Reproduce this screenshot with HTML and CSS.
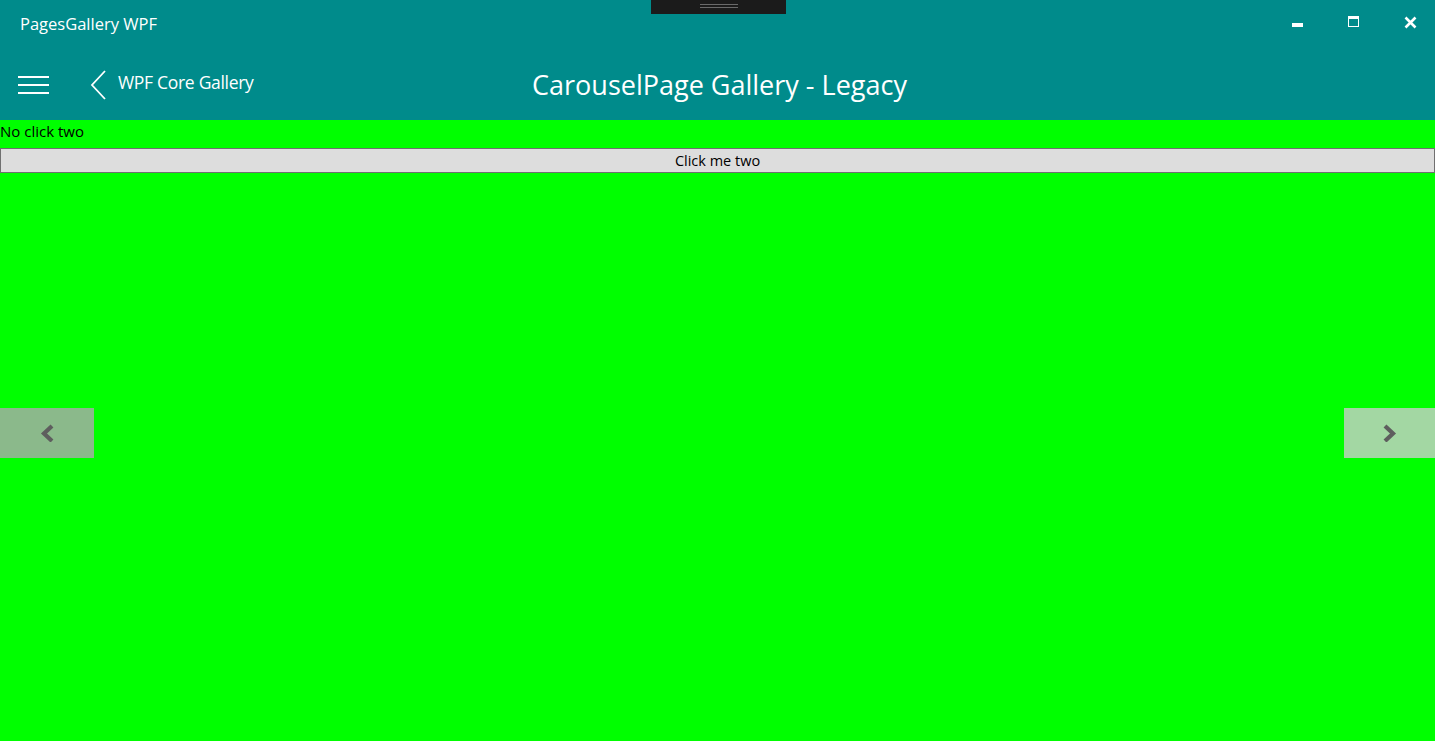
FILE: index.html
```html
<!DOCTYPE html>
<html>
<head>
<meta charset="utf-8">
<link rel="stylesheet" href="styles.css">
</head>
<body>
<div class="app">
  <header class="header">
    <div class="titlebar">
      <span class="app-title">PagesGallery WPF</span>
      <div class="grip"><span class="grip-line"></span><span class="grip-line"></span></div>
      <div class="win-controls">
        <span class="win-btn"><svg width="12" height="12" viewBox="0 0 12 12"><rect x="0" y="7" width="11" height="4" fill="#fff"/></svg></span>
        <span class="win-btn"><svg width="12" height="12" viewBox="0 0 12 12"><rect x="0.5" y="0.5" width="10" height="10" fill="none" stroke="#fff"/><rect x="0" y="0" width="11" height="3" fill="#fff"/></svg></span>
        <span class="win-btn"><svg width="13" height="13" viewBox="0 0 13 13"><path d="M1.5 1.5 L11.5 11.5 M11.5 1.5 L1.5 11.5" stroke="#fff" stroke-width="2.6"/></svg></span>
      </div>
    </div>
    <div class="navbar">
      <div class="nav-left">
        <svg class="hamburger" width="32" height="20" viewBox="0 0 32 20"><path d="M0 2 H31 M0 10 H31 M0 18 H31" stroke="#fff" stroke-width="2"/></svg>
        <div class="back">
          <svg width="17" height="30" viewBox="0 0 17 30"><path d="M15 1 L2 15 L15 29" fill="none" stroke="#fff" stroke-width="1.8"/></svg>
          <span class="back-text">WPF Core Gallery</span>
        </div>
      </div>
      <h1 class="page-title">CarouselPage Gallery - Legacy</h1>
    </div>
  </header>
  <main class="content">
    <div class="label">No click two</div>
    <button class="btn">Click me two</button>
    <div class="arrow arrow-left"><svg width="16" height="18" viewBox="0 0 16 18"><path d="M13 2 L5 9.5 L13 17" fill="none" stroke="#5e5e5e" stroke-width="4.2"/></svg></div>
    <div class="arrow arrow-right"><svg width="16" height="18" viewBox="0 0 16 18"><path d="M3 2 L11 9.5 L3 17" fill="none" stroke="#5e5e5e" stroke-width="4.2"/></svg></div>
  </main>
</div>
</body>
</html>
```
FILE: styles.css
```css
* { box-sizing: border-box; }
html, body { margin: 0; padding: 0; }
body {
  width: 1435px;
  height: 741px;
  overflow: hidden;
  font-family: "Open Sans", "Noto Sans", sans-serif;
}
.app { display: flex; flex-direction: column; height: 741px; }
.header { background: #008b8b; color: #fff; height: 120px; display: flex; flex-direction: column; }
.titlebar { height: 48px; position: relative; display: flex; align-items: flex-start; }
.app-title { font-size: 16.5px; margin: 12px 0 0 20px; letter-spacing: 0; }
.grip {
  position: absolute; left: 651px; top: 0; width: 135px; height: 14px;
  background: #1b1b1b; display: flex; flex-direction: column; align-items: center; padding-top: 4px; gap: 2px;
}
.grip-line { width: 38px; height: 1px; background: #6a6a6a; }
.win-controls { margin-left: auto; display: flex; padding-top: 16px; margin-right: -3px; }
.win-btn { width: 56px; display: flex; justify-content: center; }
.navbar { position: relative; height: 72px; display: flex; align-items: center; }
.nav-left { display: flex; align-items: center; padding-left: 18px; }
.hamburger { display: block; margin-top: 2px; }
.back { display: flex; align-items: center; margin-left: 40px; gap: 11px; }
.back svg { display: block; margin-top: 1px; }
.back-text { font-size: 17.5px; letter-spacing: -0.3px; margin-top: -4px; }
.page-title {
  position: absolute; left: 0; right: 0; top: 0; bottom: 0; margin: 0;
  display: flex; align-items: center; justify-content: center;
  font-weight: 400; font-size: 27px; padding-left: 4px; padding-top: 0; letter-spacing: 0;
}
.content { flex: 1; background: #00ff00; position: relative; display: flex; flex-direction: column; }
.label { font-size: 15px; color: #000; height: 28px; padding-top: 1px; letter-spacing: 0; }
.btn {
  width: 100%; height: 25px; background: #dddddd; border: 1px solid #707070; padding: 0;
  font-family: inherit; font-size: 14.5px; color: #000; letter-spacing: 0; line-height: 21px;
}
.arrow {
  position: absolute; top: 288px; height: 50px; display: flex; align-items: center; justify-content: center;
}
.arrow-left { left: 0; width: 94px; background: #8bb98b; }
.arrow-right { right: 0; width: 91px; background: #a3d7a3; }
```
